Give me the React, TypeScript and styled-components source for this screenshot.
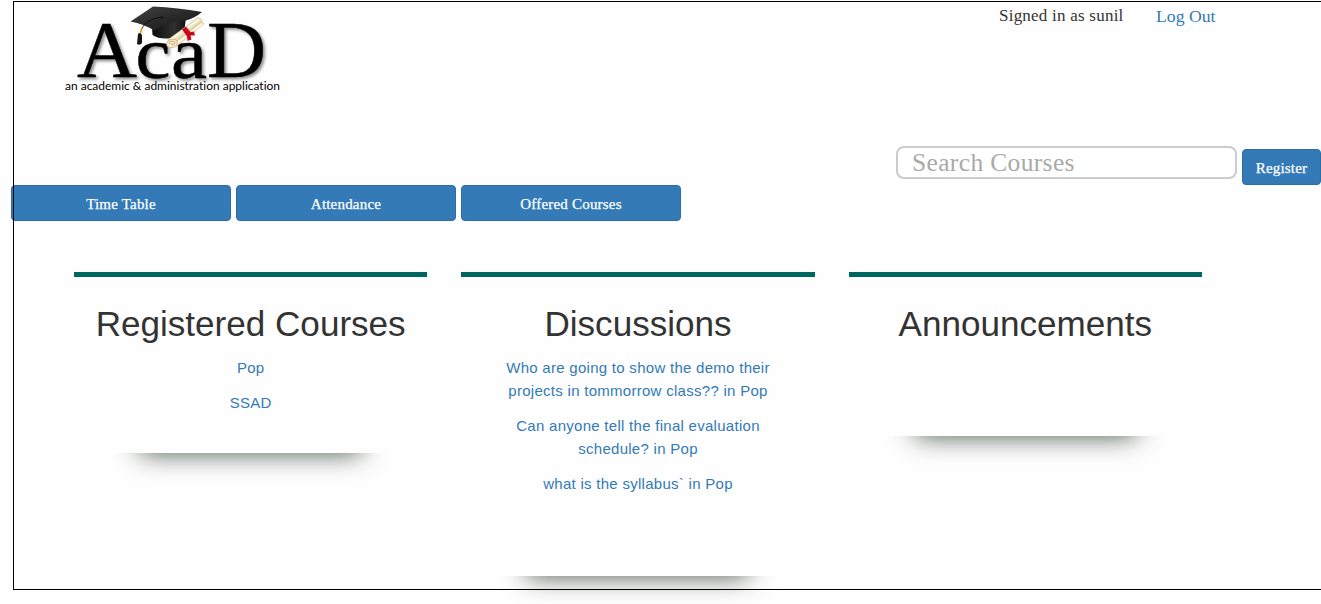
import React from "react";
import styled, { createGlobalStyle } from "styled-components";

const GlobalStyle = createGlobalStyle`
  *, *::before, *::after { box-sizing: border-box; }
  html { overflow: hidden; }
  body {
    margin: 0;
    background: #fefefe;
    color: #333;
    font-family: "Liberation Sans", Arial, sans-serif;
    overflow: hidden;
  }
`;

const Page = styled.div`
  height: 604px;
  padding: 1px 0 0 13px;
  overflow: hidden;
`;

/* The outline is painted above the content, so the first tab sits beneath it. */
const Frame = styled.div`
  position: relative;
  height: 589px;
  display: flex;
  flex-direction: column;

  &::after {
    content: "";
    position: absolute;
    inset: 0;
    border: 1px solid #000;
    border-right: 0;
    pointer-events: none;
  }
`;

const Header = styled.header`
  display: flex;
  justify-content: space-between;
  align-items: flex-start;
  height: 145px;
  padding: 0 105px 0 47px;
`;

const Logo = styled.svg`
  display: block;
  width: 230px;
  height: 100px;
`;

const Tagline = styled.text`
  font-family: Lato, sans-serif;
  font-size: 10.6px;
  font-variant-ligatures: none;
`;

const Account = styled.div`
  display: flex;
  gap: 33px;
  font-family: "Liberation Serif", "Times New Roman", serif;
  font-size: 17px;
  line-height: 20px;
  padding-top: 5px;
`;

const UserName = styled.span`
  width: 124px;
  letter-spacing: 0.23px;
  white-space: nowrap;
`;

const LogOut = styled.a`
  width: 60px;
  color: #337ab7;
  font-size: 17.7px;
  white-space: nowrap;
  text-decoration: none;
`;

const SearchRow = styled.form`
  display: flex;
  justify-content: flex-end;
  gap: 5px;
  height: 39px;
`;

const SearchInput = styled.input`
  width: 341px;
  height: 33px;
  padding: 0 14px;
  border: 2px solid #ccc;
  border-radius: 8px;
  background: #fff;
  font-family: "Liberation Serif", "Times New Roman", serif;
  font-size: 25.5px;
  letter-spacing: 0.35px;
  outline: 0;

  &::placeholder {
    color: #a9a9a9;
    opacity: 1;
  }
`;

const Button = styled.button<{ $width: number }>`
  width: ${(p) => p.$width}px;
  height: 36px;
  padding: 2px 0 0;
  border: 1px solid #2e6da4;
  border-radius: 4px;
  background: #337ab7;
  color: #fff;
  font-family: "Liberation Serif", "Times New Roman", serif;
  font-size: 15px;
  letter-spacing: 0.2px;
  line-height: 20px;
  -webkit-text-stroke: 0.25px #fff;
`;

const RegisterButton = styled(Button)`
  margin-top: 3px;
`;

const Tabs = styled.nav`
  display: flex;
  gap: 5px;
  margin-left: -2px;
`;

const Panels = styled.main`
  display: grid;
  grid-template-columns: repeat(3, 1fr);
  align-items: start;
  gap: 34px;
  width: 1128px;
  margin: 51px 0 0 61px;
`;

const Panel = styled.section`
  min-width: 0;
`;

const PanelBody = styled.div<{ $height: number }>`
  height: ${(p) => p.$height}px;
  padding: 27px 20px 0;
  border-top: 5px solid #006660;
  text-align: center;
`;

const Title = styled.h1`
  margin: 0 0 12px;
  font-size: 35.1px;
  font-weight: 400;
  line-height: 40px;
  white-space: nowrap;
`;

const Item = styled.p`
  margin: 0 0 12px;
  font-size: 15px;
  line-height: 23px;
  letter-spacing: 0.28px;
`;

const ItemLink = styled.a`
  color: #337ab7;
  text-decoration: none;
`;

const PanelShadow = styled.div`
  height: 38px;
  margin-bottom: -38px;
  overflow: hidden;

  &::before {
    content: "";
    display: block;
    width: 221px;
    height: 60px;
    margin: -60px auto 0;
    box-shadow: 0 0 27px rgba(10, 25, 10, 0.74);
  }
`;

const panels = [
  { title: "Registered Courses", height: 181, items: [["Pop"], ["SSAD"]] },
  {
    title: "Discussions",
    height: 304,
    items: [
      ["Who are going to show the demo their", "projects in tommorrow class?? in Pop"],
      ["Can anyone tell the final evaluation", "schedule? in Pop"],
      ["what is the syllabus` in Pop"],
    ],
  },
  { title: "Announcements", height: 164, items: [] as string[][] },
];

function AcadLogo() {
  return (
    <Logo viewBox="60 1 230 100" role="img" aria-label="AcaD">
      <defs>
        <linearGradient id="board" x1="0" y1="0" x2="1" y2="1">
          <stop offset="0" stopColor="#444" />
          <stop offset="0.5" stopColor="#2a2a2a" />
          <stop offset="1" stopColor="#151515" />
        </linearGradient>
        <linearGradient id="cap" x1="0" y1="0" x2="1" y2="0">
          <stop offset="0" stopColor="#0c0c0c" />
          <stop offset="0.65" stopColor="#303030" />
          <stop offset="1" stopColor="#111" />
        </linearGradient>
        <filter id="drop" x="-10%" y="-10%" width="125%" height="130%">
          <feDropShadow dx="2" dy="2" stdDeviation="1.5" floodColor="#000" floodOpacity="0.45" />
        </filter>
      </defs>
      <g
        fontFamily="'Liberation Serif', 'Times New Roman', serif"
        fill="#000"
        stroke="#000"
        strokeWidth="0.5"
        filter="url(#drop)"
      >
        <text x="77" y="77" fontSize="80" textLength="60" lengthAdjust="spacingAndGlyphs">A</text>
        <text x="135.5" y="78" fontSize="73" textLength="35" lengthAdjust="spacingAndGlyphs">c</text>
        <text x="171" y="78" fontSize="73" textLength="36" lengthAdjust="spacingAndGlyphs">a</text>
        <text x="207" y="77" fontSize="80" textLength="59" lengthAdjust="spacingAndGlyphs">D</text>
      </g>
      <Tagline x="65" y="90.3" fill="#000" textLength="215" lengthAdjust="spacingAndGlyphs">
        an academic &amp; administration application
      </Tagline>
      <path d="M152 27 L152.5 35 Q160 40 172 38 L184 33 L186 18 Z" fill="url(#cap)" />
      <path d="M130.5 21.5 L153 6.5 Q178 7.5 202 12 Q195 18 186 20.5 Q168 21 154 30.5 Q144 24 130.5 21.5 Z" fill="url(#board)" />
      <path d="M162 17 Q146 19 141.5 29" fill="none" stroke="#0b0b0b" strokeWidth="0.8" />
      <ellipse cx="162" cy="17.5" rx="1.8" ry="1" fill="#111" />
      <path d="M142 27.5 L140.5 33" stroke="#dda431" strokeWidth="1.8" />
      <path d="M138 34 Q140 31.5 142 35 L142 43 Q140 46 137 44 Z" fill="#161616" />
      <path d="M167.5 40 L198 17.5 Q201 17.5 201.5 20 L204 24 L176.5 46.5 Z" fill="#eadfb9" stroke="#cdbc90" strokeWidth="0.5" />
      <path d="M169.5 40.5 L199 19.5 M175.5 44.5 L202 24" stroke="#fffbea" strokeWidth="2" />
      <path d="M174 43 L201.5 21.5" stroke="#c9b78a" strokeWidth="0.7" />
      <ellipse cx="172" cy="43.5" rx="5.5" ry="4.2" transform="rotate(-18 172 43.5)" fill="#f4ebd0" stroke="#bfa773" strokeWidth="0.7" />
      <path d="M169 44 Q169 41 173 41 Q177 43 173 45 Q171 45 172 43" fill="none" stroke="#b89c66" strokeWidth="0.8" />
      <path d="M182 29.5 L186 26.5 L190.5 32 L194 31.5 L195 35.5 L190.5 35.5 L191.5 39.5 L187.5 41 L187 36.5 Z" fill="#d50b20" />
      <path d="M184 29 L188.5 34.5 L192.5 33.5 M188.5 35.5 L189.5 39" fill="none" stroke="#8f0010" strokeWidth="0.7" />
    </Logo>
  );
}

export default function App() {
  return (
    <>
      <GlobalStyle />
      <Page>
        <Frame>
          <Header>
            <AcadLogo />
            <Account>
              <UserName>Signed in as sunil</UserName>
              <LogOut href="#">Log Out</LogOut>
            </Account>
          </Header>
          <SearchRow>
            <SearchInput placeholder="Search Courses" aria-label="Search Courses" />
            <RegisterButton type="button" $width={79}>Register</RegisterButton>
          </SearchRow>
          <Tabs>
            <Button $width={220}>Time Table</Button>
            <Button $width={220}>Attendance</Button>
            <Button $width={220}>Offered Courses</Button>
          </Tabs>
          <Panels>
            {panels.map((panel) => (
              <Panel key={panel.title}>
                <PanelBody $height={panel.height}>
                  <Title>{panel.title}</Title>
                  {panel.items.map((lines) => (
                    <Item key={lines[0]}>
                      <ItemLink href="#">
                        {lines.map((line, i) => (
                          <React.Fragment key={line}>
                            {i > 0 && <br />}
                            {line}
                          </React.Fragment>
                        ))}
                      </ItemLink>
                    </Item>
                  ))}
                </PanelBody>
                <PanelShadow />
              </Panel>
            ))}
          </Panels>
        </Frame>
      </Page>
    </>
  );
}
